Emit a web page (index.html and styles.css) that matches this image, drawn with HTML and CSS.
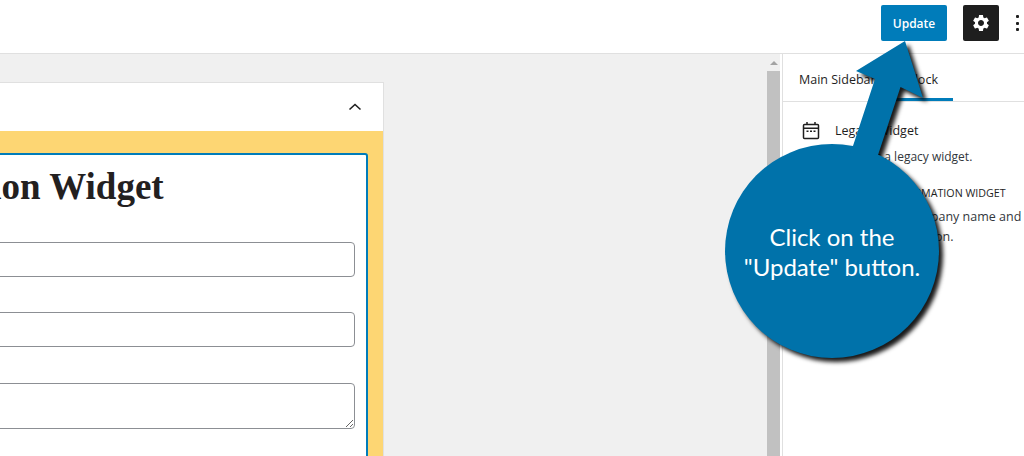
FILE: index.html
```html
<!DOCTYPE html>
<html lang="en">
  <head>
    <meta charset="UTF-8" />
    <title>Update widget</title>
    <link rel="stylesheet" href="styles.css">
  </head>

  <body>
    <header class="topbar">
      <button class="update">Update</button>
      <button class="settings">
        <svg width="20" height="20" viewBox="0 0 24 24"><path fill="#fff" d="M19.14 12.94c.04-.3.06-.61.06-.94 0-.32-.02-.64-.07-.94l2.03-1.58c.18-.14.23-.41.12-.61l-1.92-3.32c-.12-.22-.37-.29-.59-.22l-2.39.96c-.5-.38-1.03-.7-1.62-.94l-.36-2.54c-.04-.24-.24-.41-.48-.41h-3.84c-.24 0-.43.17-.47.41l-.36 2.54c-.59.24-1.13.57-1.62.94l-2.39-.96c-.22-.08-.47 0-.59.22L2.74 8.87c-.12.21-.08.47.12.61l2.03 1.58c-.05.3-.09.63-.09.94s.02.64.07.94l-2.03 1.58c-.18.14-.23.41-.12.61l1.92 3.32c.12.22.37.29.59.22l2.39-.96c.5.38 1.03.7 1.62.94l.36 2.54c.05.24.24.41.48.41h3.84c.24 0 .44-.17.47-.41l.36-2.54c.59-.24 1.13-.56 1.62-.94l2.39.96c.22.08.47 0 .59-.22l1.92-3.32c.12-.22.07-.47-.12-.61l-2.01-1.58zM12 15.6c-1.98 0-3.6-1.62-3.6-3.6s1.62-3.6 3.6-3.6 3.6 1.62 3.6 3.6-1.62 3.6-3.6 3.6z"/></svg>
      </button>
      <div class="more"><span></span><span></span><span></span></div>
    </header>

    <main class="layout">
      <section class="editor">
        <article class="card">
          <div class="card-head">
            <svg width="24" height="24" viewBox="0 0 24 24"><path fill="none" stroke="#1e1e1e" stroke-width="1.6" d="M6.5 14.5 12 9.5l5.5 5"/></svg>
          </div>
          <div class="card-body">
            <div class="widget">
              <h1>Company Information Widget</h1>
              <input class="field" type="text" />
              <input class="field" type="text" />
              <textarea class="field area"></textarea>
            </div>
          </div>
        </article>
      </section>

      <div class="scrollbar">
        <div class="scroll-arrow"></div>
        <div class="scroll-thumb"></div>
      </div>

      <aside class="sidebar">
        <nav class="tabs">
          <span class="tab">Main Sidebar</span>
          <span class="tab active">Block</span>
        </nav>
        <div class="block-info">
          <svg class="block-icon" width="24" height="24" viewBox="0 0 24 24"><path fill="none" stroke="#1e1e1e" stroke-width="1.5" d="M5.5 6.5h13a1 1 0 0 1 1 1v12a1 1 0 0 1-1 1h-13a1 1 0 0 1-1-1v-12a1 1 0 0 1 1-1zM4.5 10.2h15M8 4v2.5M16 4v2.5"/><path fill="#1e1e1e" d="M7.500 12.500h2v1.500h-2zM11 12.500h2v1.500h-2zM14.500 12.500h2v1.500h-2z"/></svg>
          <div>
            <h2>Legacy Widget</h2>
            <p>Renders a legacy widget.</p>
          </div>
        </div>
        <div class="block-extra">
          <h3>Company Information Widget</h3>
          <p>Shows your company name and contact information.</p>
        </div>
      </aside>
    </main>

    <div class="callout">
      <svg width="324" height="350" viewBox="0 0 324 350">
        <circle cx="132" cy="221" r="107"/>
        <path d="M205 11 223 68 200.500 57 178 125 150 125 175 49 156 41z"/>
      </svg>
      <p>Click on the<br />"Update" button.</p>
    </div>
  </body>
</html>
```

FILE: styles.css
```css
* {
  box-sizing: border-box;
}

html,
body {
  margin: 0;
  height: 456px;
  overflow: hidden;
}

body {
  position: relative;
  font-family: "Open Sans", "Noto Sans", sans-serif;
  color: #1e1e1e;
  background: #fff;
}

.topbar {
  display: flex;
  align-items: center;
  justify-content: flex-end;
  height: 54px;
  padding: 5px 5px 12px 0;
  border-bottom: 1px solid #e0e0e0;
}

.update {
  width: 66px;
  height: 36px;
  border: none;
  border-radius: 2px;
  background: #007cba;
  color: #fff;
  font-family: inherit;
  font-size: 12px;
  font-weight: 600;
}

.settings {
  display: flex;
  align-items: center;
  justify-content: center;
  width: 36px;
  height: 36px;
  margin-left: 16px;
  padding: 0;
  border: none;
  border-radius: 2px;
  background: #1e1e1e;
}

.more {
  display: flex;
  flex-direction: column;
  gap: 3.5px;
  width: 3px;
  margin-left: 17px;
}

.more span {
  width: 3px;
  height: 3px;
  border-radius: 1px;
  background: #1e1e1e;
}

.layout {
  display: flex;
  height: 402px;
}

.editor {
  width: 767px;
  padding-top: 28px;
  background: #f0f0f0;
  overflow: hidden;
}

.card {
  width: 719px;
  margin-left: -335px;
  border: 1px solid #e0e0e0;
  border-bottom: none;
  background: #fff;
}

.card-head {
  display: flex;
  justify-content: flex-end;
  align-items: center;
  height: 48px;
  padding-right: 16px;
}

.card-body {
  height: 400px;
  padding: 22px 15px 0 0;
  background: #fdd673;
}

.widget {
  height: 380px;
  padding: 12px 11px 0 16px;
  border: 2px solid #007cba;
  border-radius: 3px;
  background: #fff;
}

.widget h1 {
  margin: 0 0 35px;
  font-family: "Liberation Serif", serif;
  font-size: 37px;
  line-height: 40px;
  font-weight: 700;
  white-space: nowrap;
  color: #23201f;
}

.field {
  display: block;
  width: 100%;
  height: 35px;
  margin-bottom: 35px;
  border: 1px solid #8c8f94;
  border-radius: 4px;
  background: #fff;
}

.field + .area {
  height: 46px;
  margin-top: 36px;
}

.scrollbar {
  width: 13px;
  background: #f0f0f0;
}

.scroll-arrow {
  width: 0;
  height: 0;
  margin: 7px auto 6px;
  border-left: 4px solid transparent;
  border-right: 4px solid transparent;
  border-bottom: 4px solid #a3a3a3;
}

.scroll-thumb {
  height: 385px;
  background: #c1c1c1;
}

.sidebar {
  width: 242px;
  margin-left: 2px;
  border-left: 1px solid #e0e0e0;
  font-size: 12.5px;
  color: #32373c;
}

.tabs {
  display: flex;
  height: 48px;
  padding-left: 16px;
  border-bottom: 1px solid #e0e0e0;
}

.tab {
  display: block;
  padding-top: 17px;
  white-space: nowrap;
  color: #1e1e1e;
}

.tab.active {
  width: 66px;
  height: 47px;
  margin-left: 11px;
  padding-left: 20px;
  border-bottom: 3px solid #007cba;
}

.block-info {
  display: flex;
  gap: 12px;
  padding: 16px 0 0 16px;
}

.block-icon {
  flex: none;
}

.block-info h2 {
  margin: 4px 0 8px;
  font-size: 12.5px;
  line-height: 18px;
  font-weight: 500;
  color: #1e1e1e;
}

.block-info p {
  margin: 0;
  font-size: 12px;
  line-height: 18px;
}

.block-extra {
  padding: 19px 0 0 52px;
}

.block-extra h3 {
  margin: 0 0 6px;
  font-size: 10.7px;
  line-height: 16px;
  font-weight: 500;
  text-transform: uppercase;
  white-space: nowrap;
  color: #1e1e1e;
}

.block-extra p {
  margin: 0;
  line-height: 20px;
}

.callout {
  position: absolute;
  left: 700px;
  top: 30px;
  width: 324px;
  height: 350px;
}

.callout svg {
  display: block;
  fill: #0072aa;
  filter: drop-shadow(4px 4px 2px rgba(0, 0, 0, 0.9));
}

.callout p {
  position: absolute;
  left: 32px;
  top: 192px;
  width: 200px;
  margin: 0;
  font-family: "Lato", sans-serif;
  font-size: 24px;
  line-height: 30px;
  text-align: center;
  color: #fff;
}
```
